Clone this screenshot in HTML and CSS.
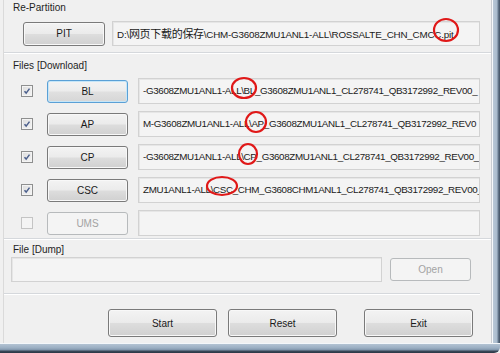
FILE: index.html
```html
<!DOCTYPE html>
<html>
<head>
<meta charset="utf-8">
<link rel="stylesheet" href="styles.css">
</head>
<body>
<div class="window">
  <div class="client">
    <section class="group repart">
      <div class="legend">Re-Partition</div>
      <div class="pit-row">
        <div class="btn pit">PIT</div>
        <div class="field pitpath">D:\<span class="cjk">网页下载的保存</span>\CHM-G3608ZMU1ANL1-ALL\ROSSALTE_CHN_CMCC.pit</div>
      </div>
    </section>
    <div class="sep"></div>
    <section class="group files">
      <div class="legend">Files [Download]</div>
      <div class="rows">
        <div class="file-row">
          <span class="check on"><svg viewBox="0 0 12 12"><path d="M3 6.2 L5 8.5 L9 3.2" /></svg></span>
          <div class="btn focus">BL</div>
          <div class="field">-G3608ZMU1ANL1-ALL\BL_G3608ZMU1ANL1_CL278741_QB3172992_REV00_</div>
        </div>
        <div class="file-row">
          <span class="check on"><svg viewBox="0 0 12 12"><path d="M3 6.2 L5 8.5 L9 3.2" /></svg></span>
          <div class="btn">AP</div>
          <div class="field">M-G3608ZMU1ANL1-ALL\AP_G3608ZMU1ANL1_CL278741_QB3172992_REV0</div>
        </div>
        <div class="file-row">
          <span class="check on"><svg viewBox="0 0 12 12"><path d="M3 6.2 L5 8.5 L9 3.2" /></svg></span>
          <div class="btn">CP</div>
          <div class="field">-G3608ZMU1ANL1-ALL\CP_G3608ZMU1ANL1_CL278741_QB3172992_REV00_</div>
        </div>
        <div class="file-row">
          <span class="check on"><svg viewBox="0 0 12 12"><path d="M3 6.2 L5 8.5 L9 3.2" /></svg></span>
          <div class="btn">CSC</div>
          <div class="field">ZMU1ANL1-ALL\CSC_CHM_G3608CHM1ANL1_CL278741_QB3172992_REV00_</div>
        </div>
        <div class="file-row">
          <span class="check off"></span>
          <div class="btn disabled">UMS</div>
          <div class="field"></div>
        </div>
      </div>
    </section>
    <div class="sep mid"></div>
    <section class="group dump">
      <div class="legend">File [Dump]</div>
      <div class="dump-row">
        <div class="field"></div>
        <div class="btn disabled open">Open</div>
      </div>
    </section>
    <div class="sep short"></div>
    <div class="actions">
      <div class="btn big">Start</div>
      <div class="btn big">Reset</div>
      <div class="btn big exit">Exit</div>
    </div>
  </div>
  <div class="frame-right"></div>
  <div class="frame-bottom"></div>
  <svg class="marks" width="500" height="353" viewBox="0 0 500 353">
    <ellipse cx="446" cy="30" rx="12" ry="11" />
    <ellipse cx="244" cy="88" rx="12" ry="10" />
    <ellipse cx="256" cy="122" rx="10" ry="10" />
    <ellipse cx="248" cy="154" rx="9" ry="10" />
    <ellipse cx="222" cy="186" rx="15" ry="9" />
  </svg>
</div>
</body>
</html>
```
FILE: styles.css
```css
html, body {
  margin: 0;
  padding: 0;
}
body {
  width: 500px;
  height: 353px;
  overflow: hidden;
  background: #f0f0f0;
  font-family: "Liberation Sans", "Noto Sans CJK SC", sans-serif;
  font-size: 10px;
  color: #1a1a1a;
}
.window {
  position: relative;
  width: 500px;
  height: 353px;
  display: grid;
  grid-template-columns: 492px 8px;
  grid-template-rows: 343px 10px;
}
.client {
  grid-column: 1;
  grid-row: 1;
  background: #f0f0f0;
  border-left: 1px solid #dadada;
  margin-left: 3px;
  border-right: 1px solid #c9cdd2;
  display: flex;
  flex-direction: column;
}
.frame-right {
  grid-column: 2;
  grid-row: 1;
  background: linear-gradient(to right, #f6f9fb 0, #f6f9fb 1px, #b9c8d7 1px, #a9bbcd 5px, #6c7f94 6px, #3f4f61 8px);
}
.frame-bottom {
  grid-column: 1 / span 2;
  grid-row: 2;
  background: linear-gradient(to bottom, #f4f7fa 0, #f4f7fa 1px, #b3c3d3 1px, #9aaec2 5px, #7f94aa 7px, #3c4a5a 8px, #2a3644 10px);
  border-bottom-right-radius: 6px;
}
.legend {
  height: 12px;
  line-height: 12px;
  padding-left: 9px;
  color: #1e1e1e;
}
.repart {
  padding-top: 2px;
}
.pit-row {
  display: flex;
  align-items: center;
  margin-top: 7px;
  padding-left: 19px;
  padding-right: 11px;
  gap: 7px;
}
.sep {
  height: 1px;
  background: #d5d8dc;
  border-bottom: 1px solid #ffffff;
  margin-top: 6px;
}
.sep.mid {
  margin-top: 2px;
}
.btn {
  box-sizing: border-box;
  display: flex;
  align-items: center;
  justify-content: center;
  border: 1px solid #7a7a7a;
  border-radius: 3px;
  background: linear-gradient(to bottom, #f3f3f3 0%, #ebebeb 48%, #dddddd 52%, #d0d0d0 100%);
  box-shadow: inset 0 0 0 1px #f8f8f8;
  color: #1a1a1a;
  font-size: 10px;
}
.btn.pit {
  width: 82px;
  height: 24px;
  flex: none;
}
.btn.focus {
  border-color: #5aa0d6;
  box-shadow: inset 0 0 0 1px #c6e6f8;
  background: linear-gradient(to bottom, #f3f3f3 0%, #ececec 48%, #e0e0e0 52%, #d6d6d6 100%);
}
.btn.disabled {
  border-color: #b7babc;
  background: #f4f4f4;
  box-shadow: none;
  color: #a3a3a3;
}
.field {
  box-sizing: border-box;
  flex: 1;
  min-width: 0;
  height: 25px;
  border: 1px solid #d2d2d2;
  background: #f4f4f4;
  box-shadow: inset 1px 1px 0 #e6e6e6;
  padding: 5px 0 0 4px;
  white-space: nowrap;
  overflow: hidden;
  font-size: 9.8px;
  letter-spacing: -0.35px;
  line-height: 12px;
}
.field.pitpath {
  letter-spacing: -0.2px;
}
.cjk {
  font-family: "Noto Sans CJK SC", sans-serif;
  font-size: 11px;
  letter-spacing: -0.3px;
}
.files .legend {
  margin-top: 6px;
}
.rows {
  display: flex;
  flex-direction: column;
  gap: 7px;
  margin-top: 6px;
  padding-left: 17px;
  padding-right: 11px;
}
.file-row {
  display: flex;
  align-items: center;
  height: 26px;
}
.file-row .field {
  height: 26px;
  padding-top: 6px;
}
.file-row .btn {
  width: 81px;
  height: 23px;
  flex: none;
  margin-left: 14px;
  margin-right: 10px;
}
.check {
  box-sizing: border-box;
  width: 12px;
  height: 12px;
  flex: none;
  border: 1px solid #8e8f8f;
  background: linear-gradient(135deg, #dcdcdc 0%, #f5f5f5 100%);
  box-shadow: inset 0 0 0 1px #f4f4f4;
  display: flex;
}
.check svg {
  width: 10px;
  height: 10px;
}
.check path {
  fill: none;
  stroke: #4b5f8c;
  stroke-width: 1.8;
}
.check.off {
  border-color: #c4c4c4;
  background: #f4f4f4;
}
.dump .legend {
  margin-top: 4px;
}
.dump-row {
  display: flex;
  align-items: center;
  margin-top: 1px;
  padding-left: 7px;
  padding-right: 20px;
  gap: 8px;
}
.dump-row .field {
  height: 25px;
}
.dump-row .btn.open {
  width: 81px;
  height: 23px;
  flex: none;
}
.sep.short {
  margin-top: 11px;
  margin-right: 11px;
}
.actions {
  display: flex;
  margin-top: 14px;
  padding-left: 104px;
}
.btn.big {
  width: 109px;
  height: 28px;
  margin-right: 11px;
}
.btn.big.exit {
  margin-left: 16px;
}
.marks {
  position: absolute;
  left: 0;
  top: 0;
  pointer-events: none;
}
.marks ellipse {
  fill: none;
  stroke: #e01818;
  stroke-width: 2.2;
}
```
